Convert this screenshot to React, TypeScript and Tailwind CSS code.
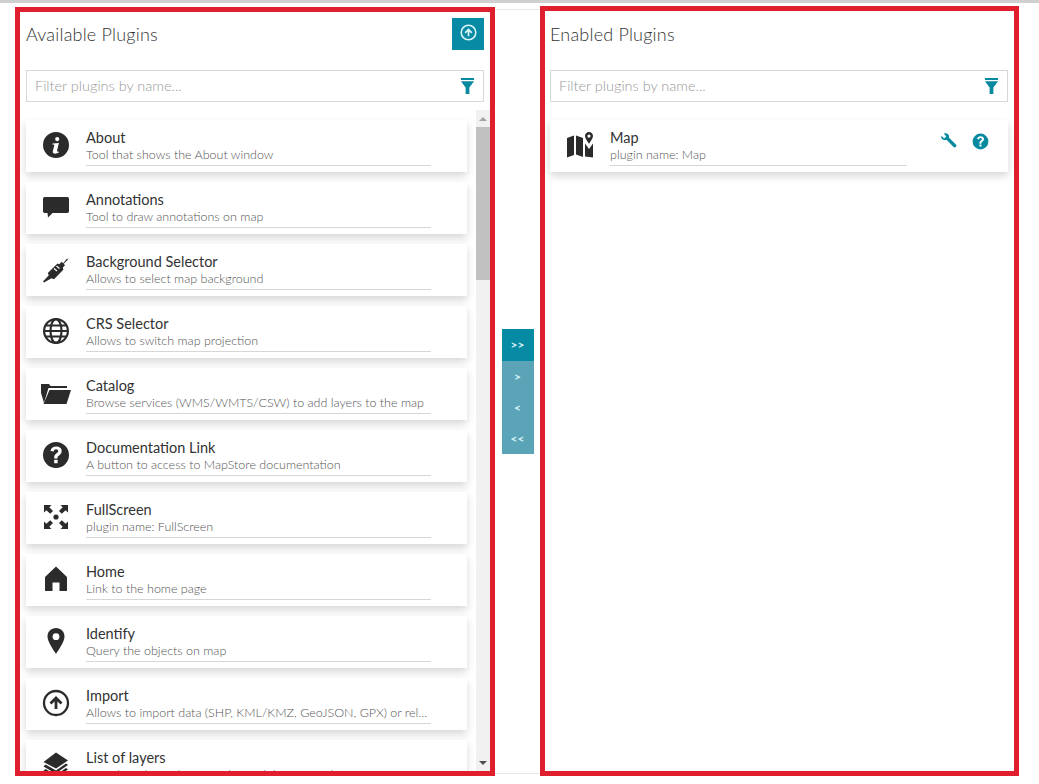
import type { ReactNode } from "react";

const FONT = "font-['Lato','Open_Sans',sans-serif]";

function Svg({ className, children }: { className?: string; children: ReactNode }) {
  return (
    <svg viewBox="0 0 28 28" className={className} fill="currentColor">
      {children}
    </svg>
  );
}

const InfoIcon = () => (
  <Svg className="h-7 w-7">
    <path
      fillRule="evenodd"
      d="M14 1a13 13 0 1 1 0 26a13 13 0 0 1 0-26ZM15.2 6a2.1 2.1 0 1 0 0 4.2a2.1 2.1 0 0 0 0-4.2ZM10.6 12.4l-.3 1.2c1.5-.2 2.2 0 1.9 1.1l-1.3 5c-.6 2.2.6 3 2.3 3c1.300 0 2.400-.4 3.600-1.100l.3-1.200c-1.500.500-2.300.300-2-.900l1.800-7.400Z"
    />
  </Svg>
);

const CommentIcon = () => (
  <Svg className="h-7 w-7">
    <path d="M2.500 4h23a2 2 0 0 1 1.500 1.500v13a2 2 0 0 1-1.500 1.500H10.500l-4.500 4.500l-.500-4.500H2.500A2 2 0 0 1 1 18.500v-13A2 2 0 0 1 2.500 4Z" />
  </Svg>
);

const PlugIcon = () => (
  <Svg className="h-7 w-7">
    <path d="M1 26.500l5.800-6.300l-1-2.200L15.500 8.500l1.700.700l2.500-2.400l1.500 1.500l3.800-4.800l1 1l-4.300 4.300l1.300 1.500l-2.300 2.500l.8 1.800l-9.500 9.700l-2.500-1L2 27.500Z" />
    <path d="M12 13.500l3 2.500M14.500 11l3 2.500" stroke="#fff" strokeWidth="1.200" fill="none" />
  </Svg>
);

const GlobeIcon = () => (
  <svg viewBox="0 0 28 28" className="h-7 w-7" fill="none" stroke="currentColor" strokeWidth="2.200">
    <circle cx="14" cy="14" r="11.900" />
    <ellipse cx="14" cy="14" rx="5.500" ry="11.900" />
    <path d="M2 14h24M3.500 8.500h21M3.500 19.500h21" strokeWidth="1.800" />
  </svg>
);

const FolderIcon = () => (
  <svg viewBox="0 0 32 28" className="h-7 w-8" fill="currentColor">
    <path d="M1 5h8l1.500 2H27v2H8.500L4 24L1 14Z" />
    <path d="M9.500 11H31l-4.500 14H3.500Z" />
  </svg>
);

const QuestionIcon = ({ className = "h-7 w-7" }: { className?: string }) => (
  <Svg className={className}>
    <path
      fillRule="evenodd"
      d="M14 1a13 13 0 1 1 0 26a13 13 0 0 1 0-26ZM14.200 5.500c-3.200 0-5.300 1.600-5.700 4.500l3.200.500c.2-1.500 1-2.200 2.400-2.200c1.300 0 2.100.700 2.100 1.800c0 2.300-4 2.500-4 6.400v1h3.300v-.800c0-2.400 4.200-2.800 4.200-6.800c0-2.800-2.300-4.400-5.500-4.400ZM12.200 18.800v3.400h3.400v-3.400Z"
    />
  </Svg>
);

const FullScreenIcon = () => (
  <Svg className="h-7 w-7">
    <circle cx="14" cy="14" r="2.600" />
    <path d="M2 2h7.500L7.300 4.200L11 8l-2.800 2.800L4.400 7.200L2 9.500ZM26 2h-7.500l2.200 2.200L17 8l2.800 2.800l3.800-3.600L26 9.500ZM2 26h7.500l-2.200-2.200L11 20l-2.800-2.800l-3.800 3.600L2 18.500ZM26 26h-7.500l2.200-2.200L17 20l2.800-2.800l3.800 3.600l2.400-2.300Z" />
  </Svg>
);

const HomeIcon = () => (
  <Svg className="h-7 w-7">
    <path d="M14 1.500L25 12v14h-7.500v-8.500h-7V26H3V12Z" />
  </Svg>
);

const PinIcon = () => (
  <Svg className="h-7 w-7">
    <path
      fillRule="evenodd"
      d="M14 1c5 0 8.500 3.600 8.500 8.500c0 5-5 12-8.500 17.500c-3.500-5.500-8.500-12.500-8.500-17.500C5.500 4.600 9 1 14 1ZM14 6.300a3.400 3.400 0 1 0 0 6.800a3.400 3.400 0 0 0 0-6.800Z"
    />
  </Svg>
);

const UpCircleIcon = ({ className = "h-7 w-7", weight = 2.300 }: { className?: string; weight?: number }) => (
  <svg viewBox="0 0 28 28" className={className} fill="none" stroke="currentColor" strokeWidth={weight}>
    <circle cx="14" cy="14" r="12" />
    <path d="M8.500 14.500L14 9l5.500 5.500M14 9.500V20" strokeWidth="2.800" />
  </svg>
);

const LayersIcon = () => (
  <Svg className="h-7 w-7">
    <path d="M14 1.500L26 9.500L14 17.500L1.500 11Z" />
    <path d="M3.500 13.500L1.500 15.500L13.500 22.500L26 14L24 12.500L14 19.500ZM3.500 18L1.500 20L13.500 27L26 18.500L24 17L14 24Z" />
  </Svg>
);

const MapIcon = () => (
  <svg viewBox="0 0 28 28" className="h-7 w-7" fill="currentColor">
    <path d="M1 7l7-2.500V24l-7 2.500ZM10 4.500l7 2.500V26l-7-2.500Z" />
    <path
      fillRule="evenodd"
      d="M23 1c2.400 0 4 1.700 4 4c0 2-2.300 5.200-4 7.800c-1.700-2.600-4-5.800-4-7.800c0-2.300 1.600-4 4-4Zm0 2.500a1.600 1.600 0 1 0 0 3.200a1.600 1.600 0 0 0 0-3.200Z"
    />
    <path d="M19 12.500l4 5.500l4-5.500V26.500l-8-1Z" />
  </svg>
);

const WrenchIcon = () => (
  <svg viewBox="0 0 20 20" className="h-[18px] w-[18px]" fill="currentColor">
    <path d="M1.500 4.300L4.600 7.200L7 5L4.200 1.800C6.500.6 9 1.500 9.800 3.700c.3.900.3 1.700 0 2.500l8.400 8.300c.9.900-1.700 3.500-2.600 2.600L7.300 8.700c-2.400.8-5-.3-5.900-2.400Z" />
  </svg>
);

const FunnelIcon = () => (
  <svg viewBox="0 0 16 18" className="h-[17px] w-[15px]" fill="currentColor">
    <path d="M1 0h14v2H1ZM1 3.500h14L10 10v7l-4 0v-7Z" />
  </svg>
);

type Plugin = { title: string; desc: string; icon: ReactNode };

const AVAILABLE: Plugin[] = [
  { title: "About", desc: "Tool that shows the About window", icon: <InfoIcon /> },
  { title: "Annotations", desc: "Tool to draw annotations on map", icon: <CommentIcon /> },
  { title: "Background Selector", desc: "Allows to select map background", icon: <PlugIcon /> },
  { title: "CRS Selector", desc: "Allows to switch map projection", icon: <GlobeIcon /> },
  { title: "Catalog", desc: "Browse services (WMS/WMTS/CSW) to add layers to the map", icon: <FolderIcon /> },
  { title: "Documentation Link", desc: "A button to access to MapStore documentation", icon: <QuestionIcon /> },
  { title: "FullScreen", desc: "plugin name: FullScreen", icon: <FullScreenIcon /> },
  { title: "Home", desc: "Link to the home page", icon: <HomeIcon /> },
  { title: "Identify", desc: "Query the objects on map", icon: <PinIcon /> },
  { title: "Import", desc: "Allows to import data (SHP, KML/KMZ, GeoJSON, GPX) or related files", icon: <UpCircleIcon /> },
  { title: "List of layers", desc: "Provides a list of layers with capability to set the", icon: <LayersIcon /> },
];

function PluginCard({ plugin, lineWidth, actions }: { plugin: Plugin; lineWidth: string; actions?: ReactNode }) {
  return (
    <div className="flex h-[52px] shrink-0 bg-white shadow-[0_4px_8px_rgba(0,0,0,0.16)]">
      <div className="flex w-[60px] shrink-0 items-center justify-center pb-[3px] text-[#2b2b2b]">{plugin.icon}</div>
      <div className={`flex h-[46px] shrink-0 flex-col justify-end border-b border-[#d6d6d6] ${lineWidth}`}>
        <div className="text-[14.500px] leading-[18px] text-[#333]">{plugin.title}</div>
        <div className="truncate pb-[2px] text-[12.500px] font-light leading-[16px] text-[#555]">{plugin.desc}</div>
      </div>
      {actions}
    </div>
  );
}

function FilterInput() {
  return (
    <div className="mt-5 flex h-8 items-center justify-between border border-[#d8d8d8] pl-2 pr-[8px]">
      <span className="text-[14.500px] font-light text-[#999]">Filter plugins by name...</span>
      <span className="text-[#078a9f]">
        <FunnelIcon />
      </span>
    </div>
  );
}

function Transfer() {
  return (
    <div className="mt-[3px] flex h-[765px] w-[45px] shrink-0 items-center justify-center border-y border-[#e6e6e6]">
      <div className="flex w-8 flex-col text-center text-[12px] font-bold text-[#d5f3f7]">
        <div className="flex h-[32px] items-center justify-center bg-[#078aa3]">&gt;&gt;</div>
        <div className="flex h-[31px] items-center justify-center bg-[#5ba4b8]">&gt;</div>
        <div className="flex h-[31px] items-center justify-center bg-[#5ba4b8]">&lt;</div>
        <div className="flex h-[31px] items-center justify-center bg-[#5ba4b8]">&lt;&lt;</div>
      </div>
    </div>
  );
}

export default function App() {
  return (
    <div className={`h-[784px] w-[1039px] overflow-hidden bg-white ${FONT}`}>
      <div className="h-[3px] bg-[#cfcfcf]" />
      <div className="flex items-start pl-[15px] pt-[3px]">
        {/* Available */}
        <section className="mt-px flex h-[769px] w-[480px] shrink-0 flex-col border-[5px] border-[#df1f2d] pt-[6px]">
          <div className="px-[6px]">
            <div className="flex h-8 items-center justify-between">
              <h2 className="text-[18px] font-light tracking-[0.2px] text-[#333]">Available Plugins</h2>
              <button className="flex h-8 w-8 items-center justify-center bg-[#078aa3] pb-[3px] text-[#d9f5f8]">
                <UpCircleIcon className="h-[17px] w-[17px]" weight={2.600} />
              </button>
            </div>
            <FilterInput />
          </div>
          <div className="mt-2 flex min-h-0 flex-1">
            <div className="flex min-w-0 flex-1 flex-col gap-[10px] overflow-hidden pl-[6px] pr-[9px] pt-[10px]">
              {AVAILABLE.map((p) => (
                <PluginCard key={p.title} plugin={p} lineWidth="w-[345px]" />
              ))}
            </div>
            <div className="flex w-[14px] shrink-0 flex-col bg-[#f1f1f1]">
              <div className="flex h-[17px] items-center justify-center">
                <div className="h-0 w-0 border-x-[4px] border-b-[4px] border-x-transparent border-b-[#a3a3a3]" />
              </div>
              <div className="h-[153px] bg-[#c1c1c1]" />
              <div className="flex-1" />
              <div className="flex h-[17px] items-center justify-center">
                <div className="h-0 w-0 border-x-[4px] border-t-[4px] border-x-transparent border-t-[#505050]" />
              </div>
            </div>
          </div>
        </section>

        <Transfer />

        {/* Enabled */}
        <section className="flex h-[770px] w-[479px] shrink-0 flex-col border-[5px] border-[#df1f2d] pl-[5px] pr-[6px] pt-[7px]">
          <div className="flex h-8 items-center">
            <h2 className="text-[18px] font-light tracking-[0.2px] text-[#333]">Enabled Plugins</h2>
          </div>
          <FilterInput />
          <div className="pt-[18px]">
            <PluginCard
              plugin={{ title: "Map", desc: "plugin name: Map", icon: <MapIcon /> }}
              lineWidth="w-[297px]"
              actions={
                <div className="ml-[33px] flex h-[42px] items-center gap-[14px] text-[#078a9f]">
                  <WrenchIcon />
                  <QuestionIcon className="h-[17px] w-[17px]" />
                </div>
              }
            />
          </div>
        </section>
      </div>
    </div>
  );
}
